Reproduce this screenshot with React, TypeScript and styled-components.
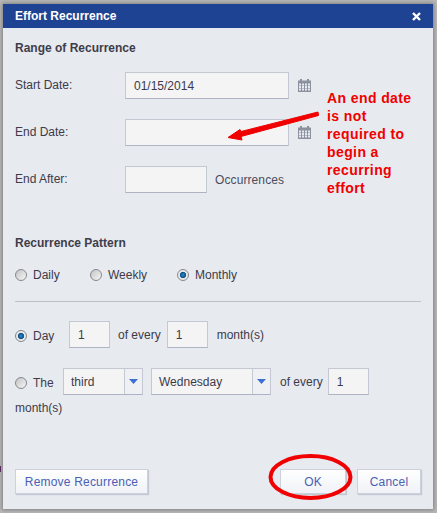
import React from "react";
import styled, { createGlobalStyle } from "styled-components";

const Global = createGlobalStyle`
  html, body { margin: 0; padding: 0; background: #b4b4b4; }
  body { width: 437px; height: 513px; overflow: hidden; font-family: "Liberation Sans", Arial, sans-serif; }
`;

const Backdrop = styled.div`
  position: relative;
  width: 437px;
  height: 513px;
  box-sizing: border-box;
  padding: 4px 4px 4px 3px;
  background: #b8b8b8;
`;
const Stray = styled.div`
  position: absolute;
  left: 0;
  top: 466px;
  width: 1px;
  height: 6px;
  background: #5a2a5e;
`;
const Dialog = styled.div`
  width: 430px;
  height: 505px;
  background: #e7eaef;
  display: flex;
  flex-direction: column;
  box-shadow: 0 0 4px 1px rgba(0,0,0,.3);
`;
const TitleBar = styled.div`
  height: 24px;
  background: #1f4393;
  color: #fff;
  font-size: 12px;
  font-weight: bold;
  display: flex;
  align-items: center;
  justify-content: space-between;
  padding: 0 12px;
  flex: none;
`;
const Close = styled.svg`
  width: 9px;
  height: 9px;
`;
const Body = styled.div`
  flex: 1;
  padding: 13px 12px 15px;
  display: flex;
  flex-direction: column;
  color: #3d3a4a;
  font-size: 12px;
`;
const SectionTitle = styled.div<{ $mt?: number }>`
  font-weight: bold;
  font-size: 12px;
  line-height: 14px;
  color: #3f3d49;
  margin-top: ${(p) => p.$mt ?? 0}px;
`;
const FormRow = styled.div<{ $mt: number }>`
  display: flex;
  align-items: center;
  height: 27px;
  margin-top: ${(p) => p.$mt}px;
`;
const Label = styled.div`
  width: 110px;
  margin-top: -1px;
`;
const Field = styled.div<{ $w: number }>`
  width: ${(p) => p.$w}px;
  height: 27px;
  box-sizing: border-box;
  background: #f4f4f5;
  border: 1px solid #c3c8d3;
  border-bottom-color: #aeb4c3;
  display: flex;
  align-items: center;
  padding-left: 8px;
  font-size: 12px;
  color: #3d3a4a;
  flex: none;
`;
const Cal = styled.svg`
  width: 13px;
  height: 13px;
  margin-left: 9px;
`;
const Occ = styled.span`
  margin-left: 8px;
  letter-spacing: 0.1px;
  color: #4a4d5c;
`;
const RadioRow = styled.div`
  display: flex;
  align-items: center;
  height: 14px;
  margin-top: 18px;
`;
const RadioItem = styled.label<{ $w: number; $drop?: number }>`
  width: ${(p) => p.$w}px;
  display: flex;
  align-items: center;
  gap: 6px;
  margin-top: ${(p) => (p.$drop ?? 0) * 2}px;
`;
const Radio = styled.span<{ $on?: boolean }>`
  width: 12px;
  height: 12px;
  box-sizing: border-box;
  border-radius: 50%;
  flex: none;
  border: 1px solid #85888e;
  background: ${(p) =>
    p.$on
      ? "radial-gradient(circle at 50% 50%, #2a8fd0 0, #0b4f86 2.8px, #e4e4e4 3.4px, #f2f2f2 100%)"
      : "linear-gradient(135deg, #c4c4c4, #f6f6f6)"};
`;
const Divider = styled.div`
  height: 1px;
  background: #bcc0c9;
  margin-top: 19px;
`;
const DayRow = styled.div`
  display: flex;
  align-items: center;
  height: 27px;
  margin-top: 19px;
`;
const TheRow = styled.div`
  display: flex;
  align-items: center;
  height: 27px;
  margin-top: 20px;
`;
const Text = styled.span<{ $ml: number; $mr?: number }>`
  margin-left: ${(p) => p.$ml}px;
  margin-right: ${(p) => p.$mr ?? 0}px;
`;
const Select = styled.div<{ $w: number; $ml: number }>`
  width: ${(p) => p.$w}px;
  margin-left: ${(p) => p.$ml}px;
  height: 27px;
  box-sizing: border-box;
  display: flex;
  align-items: stretch;
  background: #f4f4f5;
  border: 1px solid #c3c8d3;
  border-bottom-color: #aeb4c3;
  flex: none;
`;
const SelectValue = styled.div`
  flex: 1;
  display: flex;
  align-items: center;
  padding-left: 7px;
`;
const SelectBtn = styled.div`
  width: 17px;
  border-left: 1px solid #c3c8d3;
  display: flex;
  align-items: center;
  justify-content: center;
  background: #eef0f4;
`;
const Arrow = styled.svg`
  width: 9px;
  height: 5px;
`;
const Wrapped = styled.div`
  margin-top: 6px;
  line-height: 14px;
`;
const Footer = styled.div`
  margin-top: auto;
  display: flex;
  align-items: center;
`;
const Btn = styled.button<{ $w: number; $ml?: number }>`
  width: ${(p) => p.$w}px;
  margin-left: ${(p) => p.$ml ?? 0}px;
  height: 25px;
  box-sizing: border-box;
  padding: 0;
  border: 1px solid #ccd2dc;
  box-shadow: 1px 1px 1px #c3c8d2;
  background: linear-gradient(#ffffff, #f0f2f7);
  color: #4a5fb5;
  letter-spacing: 0.2px;
  font: 12px "Liberation Sans", Arial, sans-serif;
`;
const Note = styled.div`
  position: absolute;
  left: 327px;
  top: 89px;
  width: 92px;
  color: #f00000;
  font-size: 14px;
  font-weight: bold;
  line-height: 18px;
  letter-spacing: 0.4px;
`;
const Overlay = styled.svg`
  position: absolute;
  left: 0;
  top: 0;
  width: 437px;
  height: 513px;
  pointer-events: none;
`;

const Calendar = () => (
  <Cal viewBox="0 0 13 13">
    <rect x="0" y="1.5" width="13" height="11.5" fill="#8b919f" />
    <rect x="2" y="0" width="2" height="3" fill="#8b919f" />
    <rect x="9" y="0" width="2" height="3" fill="#8b919f" />
    {[1, 4, 7, 10].map((x) =>
      [4.5, 7, 9.5].map((y) => <rect key={`${x}-${y}`} x={x} y={y} width="2" height="2" fill="#e7eaef" />)
    )}
  </Cal>
);
const Down = () => (
  <Arrow viewBox="0 0 9 5">
    <path d="M0 0H9L4.5 5Z" fill="#3f6fd0" />
  </Arrow>
);

export default function App() {
  return (
    <Backdrop>
      <Global />
      <Stray />
      <Dialog>
        <TitleBar>
          Effort Recurrence
          <Close viewBox="0 0 9 9">
            <path d="M1 1L8 8M8 1L1 8" stroke="#fff" strokeWidth="2.4" />
          </Close>
        </TitleBar>
        <Body>
          <SectionTitle>Range of Recurrence</SectionTitle>
          <FormRow $mt={17}>
            <Label>Start Date:</Label>
            <Field $w={164}>01/15/2014</Field>
            <Calendar />
          </FormRow>
          <FormRow $mt={20}>
            <Label>End Date:</Label>
            <Field $w={164} />
            <Calendar />
          </FormRow>
          <FormRow $mt={20}>
            <Label>End After:</Label>
            <Field $w={82} />
            <Occ>Occurrences</Occ>
          </FormRow>
          <SectionTitle $mt={43}>Recurrence Pattern</SectionTitle>
          <RadioRow>
            <RadioItem $w={75}><Radio />Daily</RadioItem>
            <RadioItem $w={87}><Radio />Weekly</RadioItem>
            <RadioItem $w={80}><Radio $on />Monthly</RadioItem>
          </RadioRow>
          <Divider />
          <DayRow>
            <RadioItem $w={54} $drop={1}><Radio $on />Day</RadioItem>
            <Field $w={41}>1</Field>
            <Text $ml={8} $mr={6}>of every</Text>
            <Field $w={41}>1</Field>
            <Text $ml={9}>month(s)</Text>
          </DayRow>
          <TheRow>
            <RadioItem $w={48} $drop={1}><Radio />The</RadioItem>
            <Select $w={80} $ml={0}>
              <SelectValue>third</SelectValue>
              <SelectBtn><Down /></SelectBtn>
            </Select>
            <Select $w={120} $ml={8}>
              <SelectValue>Wednesday</SelectValue>
              <SelectBtn><Down /></SelectBtn>
            </Select>
            <Text $ml={9} $mr={5}>of every</Text>
            <Field $w={41}>1</Field>
          </TheRow>
          <Wrapped>month(s)</Wrapped>
          <Footer>
            <Btn $w={133}>Remove Recurrence</Btn>
            <Btn $w={66} $ml={132}>OK</Btn>
            <Btn $w={64} $ml={11}>Cancel</Btn>
          </Footer>
        </Body>
      </Dialog>
      <Note>An end date is not required to begin a recurring effort</Note>
      <Overlay viewBox="0 0 437 513">
        <path d="M318 112L241 131.500L240 129.500L228 137.500L242 140L241 136.500L318.500 115.500Z" fill="#f00000" stroke="#f00000" strokeWidth="1" strokeLinejoin="round" />
        <ellipse cx="310.500" cy="477" rx="40" ry="21" fill="none" stroke="#f00000" strokeWidth="4" />
      </Overlay>
    </Backdrop>
  );
}
